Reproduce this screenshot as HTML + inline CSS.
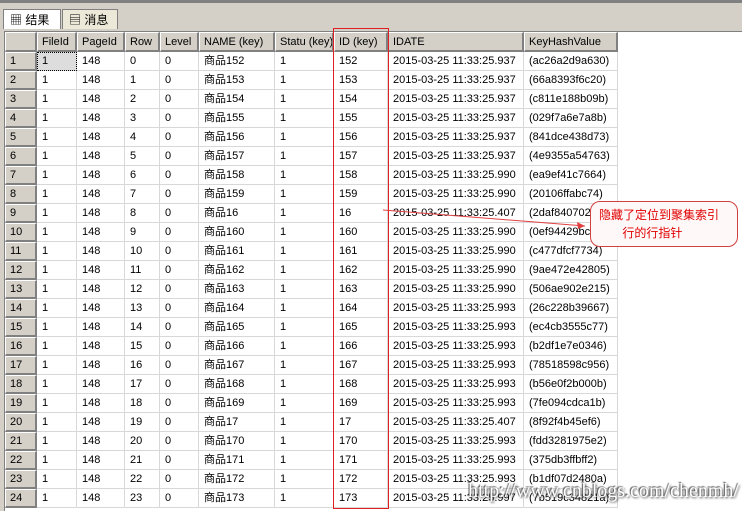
<!DOCTYPE html><html><head><meta charset="utf-8"><style>
body{margin:0;width:742px;height:510px;background:#d4d0c8;position:relative;overflow:hidden;font-family:"Liberation Sans","Noto Sans CJK SC",sans-serif;font-size:11px;color:#000}
.top{position:absolute;left:0;top:0;width:742px;height:3px;background:#808080}
.tab{position:absolute;top:9px;height:20px;border:1px solid #808080;border-bottom:none;background:#ece9d8;font-size:12px;line-height:20px;box-sizing:border-box}
.grid{position:absolute;left:4px;top:31px;width:738px;height:479px;background:#fff;border-top:1px solid #808080;border-left:1px solid #808080}
.r{display:flex;height:19px}
.r div{box-sizing:border-box;height:19px;line-height:19px;padding-left:5px;border-right:1px solid #d8d8d8;border-bottom:1px solid #d8d8d8;white-space:nowrap;overflow:hidden;flex:none}
.r div:nth-child(1){width:32px;background:#d4d0c8;border-right:2px solid #808080;border-bottom:2px solid #808080;border-top:1px solid #fff;border-left:1px solid #fff;line-height:16px;padding-left:4px}
.r div:nth-child(2){width:40px}.r div:nth-child(3){width:48px}.r div:nth-child(4){width:35px}.r div:nth-child(5){width:39px}.r div:nth-child(6){width:76px}.r div:nth-child(7){width:59px}.r div:nth-child(8){width:54px}.r div:nth-child(9){width:136px}.r div:nth-child(10){width:94px}
.r.hd{height:20px}
.r.hd div{height:20px;background:#d4d0c8;border-right:2px solid #808080;border-bottom:2px solid #808080;border-top:1px solid #fff;border-left:1px solid #fff;line-height:18px;padding-left:4px}
.red{position:absolute;left:333px;top:28px;width:54px;height:479px;border:1px solid #e02020}
.call{position:absolute;left:590px;top:201px;width:148px;height:46px;border:1px solid #d04040;border-radius:10px;background:#fff8f8;color:#e00000;font-size:12px;line-height:18px;box-sizing:border-box;padding:4px 0 0 8px}
.wm{position:absolute;left:468px;top:480px;font-family:"Liberation Serif",serif;font-size:20px;color:#fff;text-shadow:1px 1px 2px #444,-1px -1px 1px #555}
</style></head><body>
<div class="top"></div>
<div class="tab" style="left:3px;width:58px;background:#fff;padding-left:6px">▦ 结果</div>
<div class="tab" style="left:62px;width:56px;padding-left:6px">▤ 消息</div>
<div class="grid">
<div class="r hd"><div></div><div>FileId</div><div>PageId</div><div>Row</div><div>Level</div><div>NAME (key)</div><div>Statu (key)</div><div>ID (key)</div><div>IDATE</div><div>KeyHashValue</div></div>
<div class="r"><div>1</div><div style="background:#ddd;outline:1px dotted #000;outline-offset:-1px">1</div><div>148</div><div>0</div><div>0</div><div>商品152</div><div>1</div><div>152</div><div>2015-03-25 11:33:25.937</div><div>(ac26a2d9a630)</div></div>
<div class="r"><div>2</div><div>1</div><div>148</div><div>1</div><div>0</div><div>商品153</div><div>1</div><div>153</div><div>2015-03-25 11:33:25.937</div><div>(66a8393f6c20)</div></div>
<div class="r"><div>3</div><div>1</div><div>148</div><div>2</div><div>0</div><div>商品154</div><div>1</div><div>154</div><div>2015-03-25 11:33:25.937</div><div>(c811e188b09b)</div></div>
<div class="r"><div>4</div><div>1</div><div>148</div><div>3</div><div>0</div><div>商品155</div><div>1</div><div>155</div><div>2015-03-25 11:33:25.937</div><div>(029f7a6e7a8b)</div></div>
<div class="r"><div>5</div><div>1</div><div>148</div><div>4</div><div>0</div><div>商品156</div><div>1</div><div>156</div><div>2015-03-25 11:33:25.937</div><div>(841dce438d73)</div></div>
<div class="r"><div>6</div><div>1</div><div>148</div><div>5</div><div>0</div><div>商品157</div><div>1</div><div>157</div><div>2015-03-25 11:33:25.937</div><div>(4e9355a54763)</div></div>
<div class="r"><div>7</div><div>1</div><div>148</div><div>6</div><div>0</div><div>商品158</div><div>1</div><div>158</div><div>2015-03-25 11:33:25.990</div><div>(ea9ef41c7664)</div></div>
<div class="r"><div>8</div><div>1</div><div>148</div><div>7</div><div>0</div><div>商品159</div><div>1</div><div>159</div><div>2015-03-25 11:33:25.990</div><div>(20106ffabc74)</div></div>
<div class="r"><div>9</div><div>1</div><div>148</div><div>8</div><div>0</div><div>商品16</div><div>1</div><div>16</div><div>2015-03-25 11:33:25.407</div><div>(2daf84070211)</div></div>
<div class="r"><div>10</div><div>1</div><div>148</div><div>9</div><div>0</div><div>商品160</div><div>1</div><div>160</div><div>2015-03-25 11:33:25.990</div><div>(0ef94429bc24)</div></div>
<div class="r"><div>11</div><div>1</div><div>148</div><div>10</div><div>0</div><div>商品161</div><div>1</div><div>161</div><div>2015-03-25 11:33:25.990</div><div>(c477dfcf7734)</div></div>
<div class="r"><div>12</div><div>1</div><div>148</div><div>11</div><div>0</div><div>商品162</div><div>1</div><div>162</div><div>2015-03-25 11:33:25.990</div><div>(9ae472e42805)</div></div>
<div class="r"><div>13</div><div>1</div><div>148</div><div>12</div><div>0</div><div>商品163</div><div>1</div><div>163</div><div>2015-03-25 11:33:25.990</div><div>(506ae902e215)</div></div>
<div class="r"><div>14</div><div>1</div><div>148</div><div>13</div><div>0</div><div>商品164</div><div>1</div><div>164</div><div>2015-03-25 11:33:25.993</div><div>(26c228b39667)</div></div>
<div class="r"><div>15</div><div>1</div><div>148</div><div>14</div><div>0</div><div>商品165</div><div>1</div><div>165</div><div>2015-03-25 11:33:25.993</div><div>(ec4cb3555c77)</div></div>
<div class="r"><div>16</div><div>1</div><div>148</div><div>15</div><div>0</div><div>商品166</div><div>1</div><div>166</div><div>2015-03-25 11:33:25.993</div><div>(b2df1e7e0346)</div></div>
<div class="r"><div>17</div><div>1</div><div>148</div><div>16</div><div>0</div><div>商品167</div><div>1</div><div>167</div><div>2015-03-25 11:33:25.993</div><div>(78518598c956)</div></div>
<div class="r"><div>18</div><div>1</div><div>148</div><div>17</div><div>0</div><div>商品168</div><div>1</div><div>168</div><div>2015-03-25 11:33:25.993</div><div>(b56e0f2b000b)</div></div>
<div class="r"><div>19</div><div>1</div><div>148</div><div>18</div><div>0</div><div>商品169</div><div>1</div><div>169</div><div>2015-03-25 11:33:25.993</div><div>(7fe094cdca1b)</div></div>
<div class="r"><div>20</div><div>1</div><div>148</div><div>19</div><div>0</div><div>商品17</div><div>1</div><div>17</div><div>2015-03-25 11:33:25.407</div><div>(8f92f4b45ef6)</div></div>
<div class="r"><div>21</div><div>1</div><div>148</div><div>20</div><div>0</div><div>商品170</div><div>1</div><div>170</div><div>2015-03-25 11:33:25.993</div><div>(fdd3281975e2)</div></div>
<div class="r"><div>22</div><div>1</div><div>148</div><div>21</div><div>0</div><div>商品171</div><div>1</div><div>171</div><div>2015-03-25 11:33:25.993</div><div>(375db3ffbff2)</div></div>
<div class="r"><div>23</div><div>1</div><div>148</div><div>22</div><div>0</div><div>商品172</div><div>1</div><div>172</div><div>2015-03-25 11:33:25.993</div><div>(b1df07d2480a)</div></div>
<div class="r"><div>24</div><div>1</div><div>148</div><div>23</div><div>0</div><div>商品173</div><div>1</div><div>173</div><div>2015-03-25 11:33:25.997</div><div>(7b519c34821a)</div></div>
</div>
<div class="red"></div>
<svg style="position:absolute;left:0;top:0" width="742" height="510"><line x1="383" y1="210" x2="585" y2="226" stroke="#e04040" stroke-width="1"/><path d="M585 226 L577 222 L578 229 Z" fill="#e04040"/></svg>
<div class="call">隐藏了定位到聚集索引<br>&nbsp;&nbsp;&nbsp;&nbsp;&nbsp;&nbsp;&nbsp;行的行指针</div>
<div class="wm">http://www.cnblogs.com/chenmh/</div>
</body></html>
